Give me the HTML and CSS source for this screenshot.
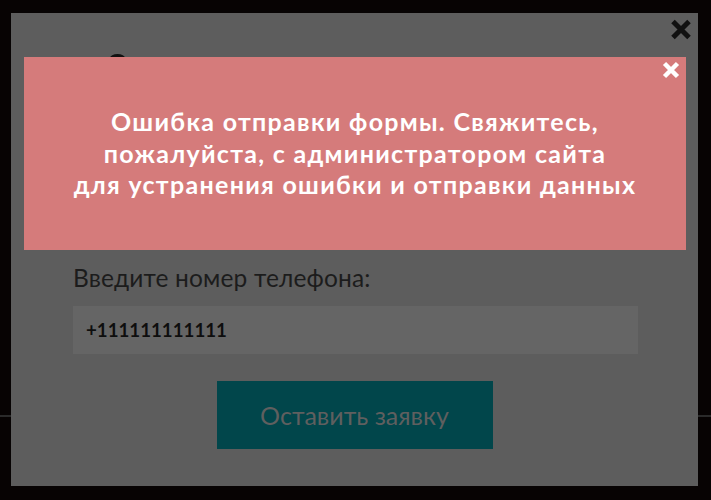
FILE: index.html
```html
<!DOCTYPE html>
<html lang="ru">
<head>
<meta charset="utf-8">
<title>Заявка</title>
<link rel="stylesheet" href="styles.css">
</head>
<body>
<div class="modal">
  <button class="modal-close" aria-label="Закрыть">
    <svg width="22" height="21" viewBox="0 0 22 21"><path d="M3 2.5 L19 18.5 M19 2.5 L3 18.5" stroke="#111" stroke-width="5" fill="none"/></svg>
  </button>
  <span class="title-peek"></span>
  <form class="modal-body">
    <label class="label" for="phone">Введите номер телефона:</label>
    <div class="input" id="phone">+111111111111</div>
    <button type="button" class="submit">Оставить заявку</button>
  </form>
  <div class="error">
    <button class="error-close" aria-label="Закрыть">
      <svg width="18" height="18" viewBox="0 0 18 18"><path d="M2.5 2.5 L15.5 15.5 M15.5 2.5 L2.5 15.5" stroke="#fff" stroke-width="4.5" fill="none"/></svg>
    </button>
    <p class="error-text">Ошибка отправки формы. Свяжитесь,<br>пожалуйста, с администратором сайта<br>для устранения ошибки и отправки данных</p>
  </div>
</div>
</body>
</html>
```

FILE: styles.css
```css
* { box-sizing: border-box; }
html, body { margin: 0; padding: 0; }
body {
  width: 711px;
  height: 500px;
  overflow: hidden;
  background:
    linear-gradient(to bottom, transparent 415px, #2a2a2a 415px, #2a2a2a 417px, transparent 417px),
    #070303;
  font-family: Lato, "Liberation Sans", sans-serif;
  padding-top: 13px;
  padding-left: 11px;
}
.modal {
  position: relative;
  width: 687px;
  height: 473px;
  background: #5d5d5d;
}
.modal-close {
  position: absolute;
  left: 659px;
  top: 6px;
  width: 22px;
  height: 21px;
  padding: 0;
  border: 0;
  background: none;
  display: block;
}
.modal-close svg, .error-close svg { display: block; }
.title-peek {
  position: absolute;
  left: 99px;
  top: 41px;
  width: 15px;
  height: 8px;
  border-radius: 50%;
  background: #111;
}
.modal-body {
  display: flex;
  flex-direction: column;
  padding: 251px 60px 0 62px;
  margin: 0;
}
.label {
  font-size: 24.5px;
  line-height: 28px;
  letter-spacing: 0.15px;
  color: #1c1c1c;
}
.input {
  margin-top: 14px;
  height: 48px;
  background: #656565;
  display: flex;
  align-items: center;
  padding-left: 13px;
  font-size: 18.7px;
  font-weight: 700;
  color: #0e0e0e;
}
.submit {
  align-self: center;
  margin: 27px 0 0 -2px;
  width: 276px;
  height: 68px;
  border: 0;
  background: #01464b;
  color: #5f5f5f;
  font-family: Lato, "Liberation Sans", sans-serif;
  font-size: 25px;
  padding: 0;
}
.error {
  position: absolute;
  left: 13px;
  top: 44px;
  width: 662px;
  height: 193px;
  background: #d57b7b;
  display: flex;
  align-items: center;
  justify-content: center;
}
.error-close {
  position: absolute;
  left: 638px;
  top: 4px;
  width: 18px;
  height: 18px;
  padding: 0;
  border: 0;
  background: none;
}
.error-text {
  margin: 0;
  text-align: center;
  color: #fff;
  font-weight: 700;
  font-size: 25px;
  line-height: 31.5px;
  letter-spacing: 1.3px;
}
```
